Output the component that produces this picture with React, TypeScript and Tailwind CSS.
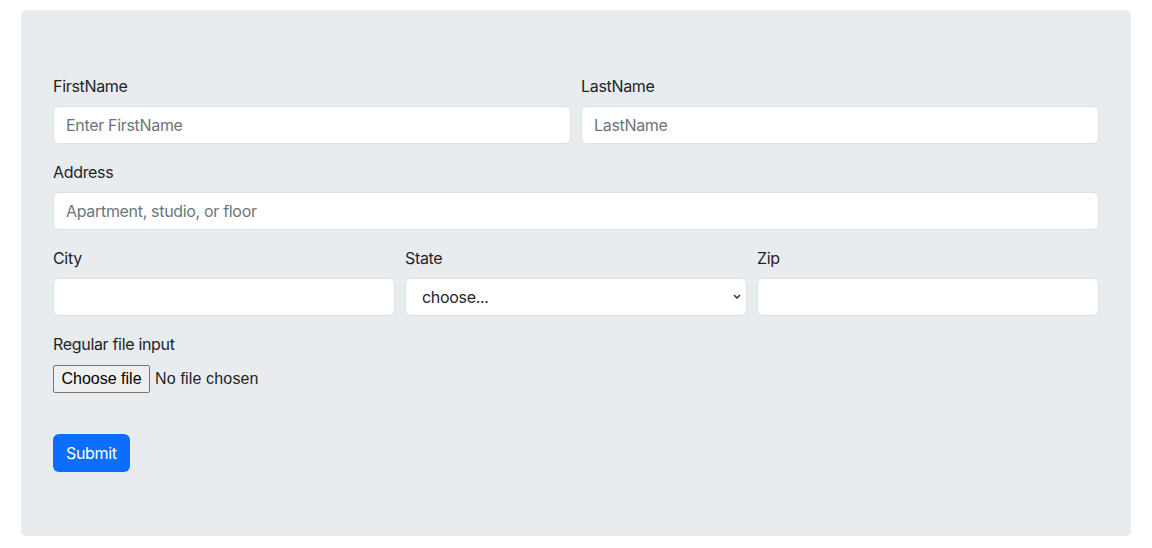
export default function App() {
  const inputCls =
    "block w-full h-[38px] rounded-[6px] border border-[#dee2e6] bg-white px-3 text-base text-[#212529] placeholder:text-[#6c757d] outline-none";
  const labelCls = "block mb-2 text-base leading-6 text-[#212529]";

  return (
    <div className="min-h-[548px] bg-white pt-[10px] px-[21px] font-['Inter',sans-serif] tracking-[-0.02em]">
      <form className="w-[1110px] rounded-[5px] bg-[#e9ecef] px-8 pt-16 pb-16">
        <div className="grid grid-cols-2 gap-x-[10px]">
          <div>
            <label className={labelCls}>FirstName</label>
            <input className={inputCls} placeholder="Enter FirstName" />
          </div>
          <div>
            <label className={labelCls}>LastName</label>
            <input className={inputCls} placeholder="LastName" />
          </div>
        </div>

        <div className="mt-4">
          <label className={labelCls}>Address</label>
          <input className={inputCls} placeholder="Apartment, studio, or floor" />
        </div>

        <div className="mt-4 grid grid-cols-3 gap-x-[10px]">
          <div>
            <label className={labelCls}>City</label>
            <input className={inputCls} />
          </div>
          <div>
            <label className={labelCls}>State</label>
            <div className="relative">
              <select
                className="block w-full h-[38px] appearance-none rounded-[6px] border border-[#dee2e6] bg-white pl-4 pr-8 text-base text-[#212529] outline-none"
                defaultValue="choose"
              >
                <option value="choose">choose...</option>
                <option>...</option>
              </select>
              <svg
                className="pointer-events-none absolute right-[5px] top-1/2 -translate-y-1/2"
                width="10"
                height="10"
                viewBox="0 0 10 10"
                fill="none"
              >
                <path d="M2.5 3.5 L5 6 L7.5 3.5" stroke="#333" strokeWidth="1.6" strokeLinecap="round" strokeLinejoin="round" />
              </svg>
            </div>
          </div>
          <div>
            <label className={labelCls}>Zip</label>
            <input className={inputCls} />
          </div>
        </div>

        <div className="mt-4">
          <label className={labelCls}>Regular file input</label>
          <label className="flex items-center gap-[5px] h-[29px] font-['Liberation_Sans',Arial,sans-serif] text-base tracking-normal text-[#212529] cursor-pointer">
            <input type="file" className="hidden" />
            <span className="flex h-[28px] items-center rounded-[2px] border border-[#767676] bg-[#efefef] px-[7.5px] text-black">
              Choose file
            </span>
            <span className="tracking-[0.01em]">No file chosen</span>
          </label>
        </div>

        <button
          type="button"
          className="mt-[41px] h-[38px] rounded-[6px] bg-[#0d6efd] px-[13px] text-base text-white"
        >
          Submit
        </button>
      </form>
    </div>
  );
}
